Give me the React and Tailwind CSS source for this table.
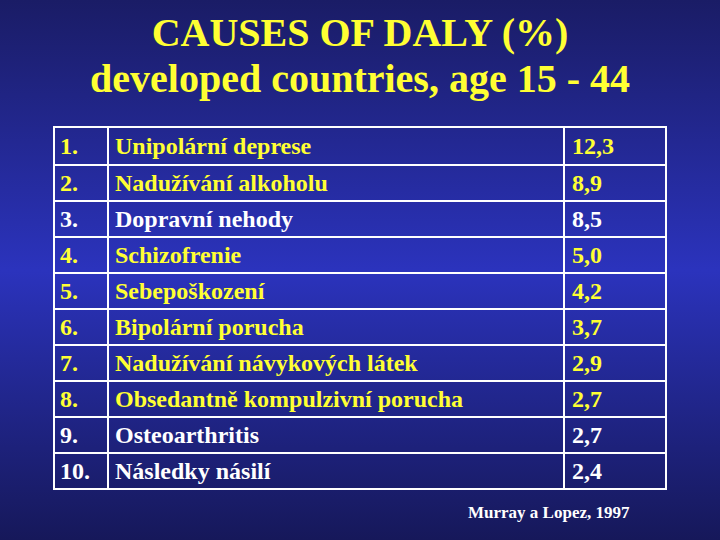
export default function App() {
  return (
    <div className="w-[720px] h-[540px] overflow-hidden bg-linear-to-b from-[#1a1c66] via-[#2b33bd] to-[#16185a]">
      <div className="font-bold">
        <div className="pt-[10px] text-center text-[#ffff33] text-[40px] leading-[46px]">
          <div className="font-['Liberation_Serif']">CAUSES OF DALY (%)</div>
          <div className="font-['Liberation_Serif']">developed countries, age 15 - 44</div>
        </div>

        <div className="mt-[24px] ml-[53px] w-[614px] border-2 border-white">
          {rows.map((row, i) => (
            <Row key={row[0]} row={row} first={i === 0} />
          ))}
        </div>

        <div className="mt-[14px] ml-[468px] text-white text-[17px] leading-none font-['Liberation_Serif']">
          Murray a Lopez, 1997
        </div>
      </div>
    </div>
  );
}

function Row({ row, first }) {
  const [num, name, val, yellow] = row;
  const color = yellow ? "text-[#ffff33]" : "text-white";
  const line = first ? "" : "border-t-2 border-white";
  return (
    <div className={`flex h-[36px] text-[24px] leading-none ${color} ${line}`}>
      <div className="w-[54px] pl-[5px] flex items-center border-r-2 border-white font-['Liberation_Serif']">
        {num}
      </div>
      <div className="w-[456px] pl-[6px] flex items-center border-r-2 border-white font-['Liberation_Serif']">
        {name}
      </div>
      <div className="flex-1 pl-[7px] flex items-center font-['Liberation_Serif']">
        {val}
      </div>
    </div>
  );
}

const rows = [
  ["1.", "Unipolární deprese", "12,3", true],
  ["2.", "Nadužívání alkoholu", "8,9", true],
  ["3.", "Dopravní nehody", "8,5", false],
  ["4.", "Schizofrenie", "5,0", true],
  ["5.", "Sebepoškození", "4,2", true],
  ["6.", "Bipolární porucha", "3,7", true],
  ["7.", "Nadužívání návykových látek", "2,9", true],
  ["8.", "Obsedantně kompulzivní porucha", "2,7", true],
  ["9.", "Osteoarthritis", "2,7", false],
  ["10.", "Následky násilí", "2,4", false],
];
